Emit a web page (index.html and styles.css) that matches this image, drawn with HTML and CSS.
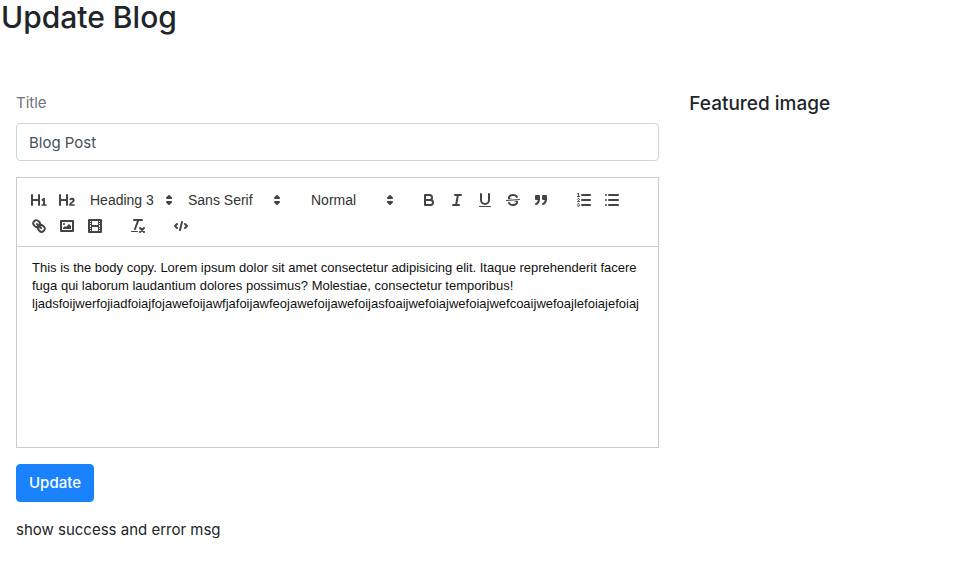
FILE: index.html
```html
<!DOCTYPE html>
<html lang="en">
<head>
<meta charset="utf-8">
<meta name="viewport" content="width=device-width, initial-scale=1">
<title>Update Blog</title>
<link rel="stylesheet" href="styles.css">
</head>
<body>
<h2 class="page-title">Update Blog</h2>
<div class="layout">
  <main>
    <form class="blog-form">
      <div class="field">
        <label class="field-label" for="title">Title</label>
        <input class="field-input" id="title" type="text" value="Blog Post">
      </div>
      <div class="editor">
        <div class="toolbar" role="toolbar" aria-label="Formatting">
          <div class="group">
            <button class="tool" type="button" aria-label="Heading 1"><svg viewBox="0 0 18 18"><path class="fill" d="M10,4V14a1,1,0,0,1-2,0V10H3v4a1,1,0,0,1-2,0V4A1,1,0,0,1,3,4V8H8V4a1,1,0,0,1,2,0Zm6.06787,9.209H14.98975V7.59863a.54085.54085,0,0,0-.605-.60547h-.62744a1.01119,1.01119,0,0,0-.748.29688L11.645,8.56641a.5435.5435,0,0,0-.022.8584l.28613.30762a.53861.53861,0,0,0,.84717.0332l.09912-.08789a1.2137,1.2137,0,0,0,.2417-.35254h.02246s-.01123.30859-.01123.60547V13.209H12.041a.54085.54085,0,0,0-.605.60547v.43945a.54085.54085,0,0,0,.605.60547h4.02686a.54085.54085,0,0,0,.605-.60547v-.43945A.54085.54085,0,0,0,16.06787,13.209Z"/></svg></button>
            <button class="tool" type="button" aria-label="Heading 2"><svg viewBox="0 0 18 18"><path class="fill" d="M16.73975,13.81445v.43945a.54085.54085,0,0,1-.605.60547H11.855a.58392.58392,0,0,1-.64893-.60547V14.0127c0-2.90527,3.39941-3.42187,3.39941-4.55469a.77675.77675,0,0,0-.84717-.78125,1.17684,1.17684,0,0,0-.83594.38477c-.2749.26367-.561.374-.85791.13184l-.4292-.34082c-.30811-.24219-.38525-.51758-.1543-.81445a2.97155,2.97155,0,0,1,2.45361-1.17676,2.45393,2.45393,0,0,1,2.68408,2.40918c0,2.45312-3.1792,2.92676-3.27832,3.93848h2.79443A.54085.54085,0,0,1,16.73975,13.81445ZM9,3A.99974.99974,0,0,0,8,4V8H3V4A1,1,0,0,0,1,4V14a1,1,0,0,0,2,0V10H8v4a1,1,0,0,0,2,0V4A.99974.99974,0,0,0,9,3Z"/></svg></button>
            <span class="picker"><select aria-label="Heading level"><option>Heading 3</option></select><svg viewBox="0 0 18 18"><polygon class="stroke" points="7 11 9 13 11 11 7 11"/><polygon class="stroke" points="7 7 9 5 11 7 7 7"/></svg></span>
            <span class="picker picker-font"><select aria-label="Font"><option>Sans Serif</option></select><svg viewBox="0 0 18 18"><polygon class="stroke" points="7 11 9 13 11 11 7 11"/><polygon class="stroke" points="7 7 9 5 11 7 7 7"/></svg></span>
          </div>
          <div class="group">
            <span class="picker"><select aria-label="Text size"><option>Normal</option></select><svg viewBox="0 0 18 18"><polygon class="stroke" points="7 11 9 13 11 11 7 11"/><polygon class="stroke" points="7 7 9 5 11 7 7 7"/></svg></span>
          </div>
          <div class="group">
            <button class="tool" type="button" aria-label="Bold"><svg viewBox="0 0 18 18"><path class="stroke" d="M5,4H9.5A2.5,2.5,0,0,1,9.5,9H5Z"/><path class="stroke" d="M5,9h5.5A2.5,2.5,0,0,1,10.5,14H5Z"/></svg></button>
            <button class="tool" type="button" aria-label="Italic"><svg viewBox="0 0 18 18"><path class="stroke" d="M7,4H13M5,14H11M8,14L10,4"/></svg></button>
            <button class="tool" type="button" aria-label="Underline"><svg viewBox="0 0 18 18"><path class="stroke" d="M5,3V9a4.012,4.012,0,0,0,4,4H9a4.012,4.012,0,0,0,4-4V3"/><rect class="fill" x="3" y="15" width="12" height="1" rx="0.5"/></svg></button>
            <button class="tool" type="button" aria-label="Strikethrough"><svg viewBox="0 0 18 18"><path class="stroke thin" d="M15.5,8.5L2.5,9.5"/><path class="fill" d="M9.007,8C6.542,7.791,6,7.519,6,6.5,6,5.792,7.283,5,9,5c1.571,0,2.765.679,2.969,1.309a1,1,0,0,0,1.9-.617C13.356,4.106,11.354,3,9,3,6.2,3,4,4.538,4,6.5a3.2,3.2,0,0,0,.5,1.843Z"/><path class="fill" d="M8.984,10C11.457,10.208,12,10.479,12,11.5c0,0.708-1.283,1.5-3,1.5-1.571,0-2.765-.679-2.969-1.309a1,1,0,1,0-1.9.617C4.644,13.894,6.646,15,9,15c2.8,0,5-1.538,5-3.5a3.2,3.2,0,0,0-.5-1.843Z"/></svg></button>
            <button class="tool" type="button" aria-label="Quote"><svg viewBox="0 0 18 18"><rect class="stroke fill" x="4" y="5" width="3" height="3"/><rect class="stroke fill" x="11" y="5" width="3" height="3"/><path class="stroke fill" d="M7,8c0,4.031-3,5-3,5"/><path class="stroke fill" d="M14,8c0,4.031-3,5-3,5"/></svg></button>
          </div>
          <div class="group">
            <button class="tool" type="button" aria-label="Numbered list"><svg viewBox="0 0 18 18"><path class="stroke" d="M7,4H15M7,9H15M7,14H15"/><path class="stroke thin" d="M2.5,5.5H4.5"/><path class="fill" d="M3.5,6A0.5,0.5,0,0,1,3,5.5V3.085l-0.276.138A0.5,0.5,0,0,1,2.053,3c-0.124-.247-0.023-0.324.224-0.447l1-.5A0.5,0.5,0,0,1,4,2.5v3A0.5,0.5,0,0,1,3.5,6Z"/><path class="stroke thin" d="M4.5,10.5h-2c0-.234,1.85-1.076,1.85-2.234A0.959,0.959,0,0,0,2.5,8.156"/><path class="stroke thin" d="M2.5,14.846a0.959,0.959,0,0,0,1.85-.109A0.7,0.7,0,0,0,3.75,14a0.688,0.688,0,0,0,.6-0.736,0.959,0.959,0,0,0-1.85-.109"/></svg></button>
            <button class="tool" type="button" aria-label="Bulleted list"><svg viewBox="0 0 18 18"><path class="stroke" d="M6,4H15M6,9H15M6,14H15M3,4H3M3,9H3M3,14H3"/></svg></button>
          </div>
          <div class="group">
            <button class="tool" type="button" aria-label="Link"><svg viewBox="0 0 18 18"><path class="stroke" d="M7,7L11,11"/><path class="stroke" d="M8.9,4.577a3.476,3.476,0,0,1,.36,4.679A3.476,3.476,0,0,1,4.577,8.9C3.185,7.5,2.035,6.4,4.217,4.217S7.5,3.185,8.9,4.577Z"/><path class="stroke" d="M13.423,9.1a3.476,3.476,0,0,0-4.679-.36,3.476,3.476,0,0,0,.36,4.679c1.392,1.392,2.5,2.542,4.679.36S14.815,10.5,13.423,9.1Z"/></svg></button>
            <button class="tool" type="button" aria-label="Image"><svg viewBox="0 0 18 18"><rect class="stroke" x="3" y="4" width="12" height="10"/><circle class="fill" cx="6" cy="7" r="1"/><polygon class="fill" points="5 12 5 11 7 9 8 10 11 7 13 9 13 12"/></svg></button>
            <button class="tool" type="button" aria-label="Video"><svg viewBox="0 0 18 18"><rect class="stroke" x="3" y="3" width="12" height="12"/><path class="fill" d="M5,3h1v12h-1zM12,3h1v12h-1zM5,8h8v2h-8zM3,5h3v1h-3zM3,7h3v1h-3zM3,10h3v1h-3zM3,12h3v1h-3zM12,5h3v1h-3zM12,7h3v1h-3zM12,10h3v1h-3zM12,12h3v1h-3z"/></svg></button>
          </div>
          <div class="group">
            <button class="tool" type="button" aria-label="Clear formatting"><svg viewBox="0 0 18 18"><path class="stroke" d="M5,3H13M6,12L9.35,3M11,11L15,15M15,11L11,15"/><rect class="fill" x="2" y="14" width="7" height="1" rx="0.5"/></svg></button>
          </div>
          <div class="group">
            <button class="tool" type="button" aria-label="Code block"><svg viewBox="0 0 18 18"><path class="stroke" d="M5,7L3,9L5,11M13,7L15,9L13,11M10,5L8,13"/></svg></button>
          </div>
        </div>
        <div class="editor-body" contenteditable="true" role="textbox" aria-multiline="true" aria-label="Body" spellcheck="false">
          <p>This is the body copy. Lorem ipsum dolor sit amet consectetur adipisicing elit. Itaque reprehenderit facere fuga qui laborum laudantium dolores possimus? Molestiae, consectetur temporibus!</p>
          <p>ljadsfoijwerfojiadfoiajfojawefoijawfjafoijawfeojawefoijawefoijasfoaijwefoiajwefoiajwefcoaijwefoajlefoiajefoiaj</p>
        </div>
      </div>
      <button class="submit" type="submit">Update</button>
    </form>
    <p class="message">show success and error msg</p>
  </main>
  <aside>
    <h5 class="aside-title">Featured image</h5>
  </aside>
</div>
</body>
</html>
```
FILE: styles.css
```css
*, *::before, *::after {
  box-sizing: border-box;
}

body {
  margin: 0;
  background: #fff;
  color: #212529;
  font-family: Inter, "Liberation Sans", sans-serif;
  font-size: 15px;
  line-height: 24px;
}

h2, h5, p {
  margin: 0;
}

.page-title {
  padding: 0 1px;
  font-size: 30px;
  font-weight: 500;
  line-height: 34px;
}

.layout {
  display: grid;
  grid-template-columns: minmax(0, 7fr) minmax(0, 3fr);
  gap: 30px;
  padding: 57px 15px 0 16px;
}

.field {
  margin-bottom: 16px;
}

.field-label {
  display: block;
  margin-bottom: 8px;
  color: #6c757d;
}

.field-input {
  display: block;
  width: 100%;
  height: 38px;
  padding: 6px 12px;
  border: 1px solid #ced4da;
  border-radius: 4px;
  background: #fff;
  color: #495057;
  font: inherit;
}

.editor {
  margin-bottom: 16px;
  border: 1px solid #ccc;
  font-family: "Liberation Sans", Arial, sans-serif;
}

.toolbar {
  display: flex;
  flex-wrap: wrap;
  gap: 2px 15px;
  padding: 10px 8px 8px;
  border-bottom: 1px solid #ccc;
}

.group {
  display: flex;
}

.tool {
  width: 28px;
  height: 24px;
  padding: 3px 5px;
  border: 0;
  background: none;
}

.tool svg, .picker svg {
  display: block;
  width: 18px;
  height: 18px;
}

.stroke {
  fill: none;
  stroke: #444;
  stroke-width: 2;
  stroke-linecap: round;
  stroke-linejoin: round;
}

.thin {
  stroke-width: 1;
}

.fill {
  fill: #444;
}

.picker {
  position: relative;
  width: 98px;
  height: 24px;
}

.picker-font {
  width: 108px;
}

.picker select {
  width: 100%;
  height: 24px;
  padding: 0 9px;
  border: 0;
  appearance: none;
  background: none;
  color: #333;
  font-family: inherit;
  font-size: 14px;
  font-weight: 500;
}

.picker svg {
  position: absolute;
  top: 3px;
  right: 1px;
  pointer-events: none;
}

.editor-body {
  min-height: 200px;
  padding: 12px 15px;
  color: #111;
  font-size: 13px;
  line-height: 18px;
  overflow-wrap: break-word;
}

.submit {
  display: block;
  height: 38px;
  padding: 6px 12px;
  border: 1px solid #1a82ff;
  border-radius: 4px;
  background: #1a82ff;
  color: #fff;
  font: inherit;
  font-weight: 500;
}

.message {
  margin-top: 16px;
}

.aside-title {
  font-size: 19px;
  font-weight: 500;
  line-height: 26px;
}
```
